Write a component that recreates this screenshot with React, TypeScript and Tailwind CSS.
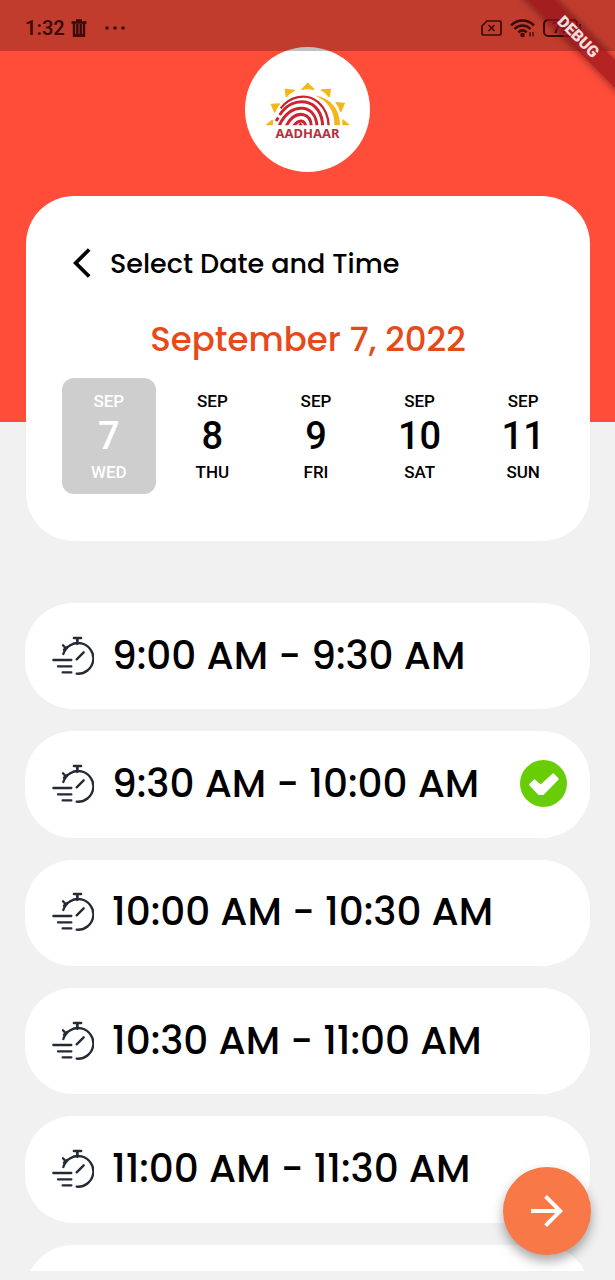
import { useState } from "react";
import { MdArrowBackIos, MdArrowForward } from "react-icons/md";

const days = [
  { month: "SEP", day: 7, weekday: "WED" },
  { month: "SEP", day: 8, weekday: "THU" },
  { month: "SEP", day: 9, weekday: "FRI" },
  { month: "SEP", day: 10, weekday: "SAT" },
  { month: "SEP", day: 11, weekday: "SUN" },
];

const slots = [
  "9:00 AM - 9:30 AM",
  "9:30 AM - 10:00 AM",
  "10:00 AM - 10:30 AM",
  "10:30 AM - 11:00 AM",
  "11:00 AM - 11:30 AM",
];

function StatusBar() {
  return (
    <div className="relative z-10 flex h-[51px] shrink-0 items-center bg-[#0a0a0a]/25 pt-1 pr-[34px] pl-[25px] text-[#3a0b08]">
      <span className="text-xl leading-6 font-semibold">1:32</span>
      <svg className="ml-1.5 h-[18px] w-4" viewBox="0 0 16 18" fill="none" stroke="currentColor">
        <path d="M0.500 3.500h15M5 1.500h6" strokeWidth="2.600" />
        <path d="M3 4v12.500h10V4M6.300 5v11M9.700 5v11" strokeWidth="2.400" />
        <path d="M2 16.500h12" strokeWidth="2.400" />
      </svg>
      <svg className="ml-[18px] h-1 w-5" viewBox="0 0 20 4" fill="currentColor">
        <circle cx="2" cy="2" r="1.800" />
        <circle cx="10" cy="2" r="1.800" />
        <circle cx="18" cy="2" r="1.800" />
      </svg>
      <svg className="ml-auto h-4 w-[21px]" viewBox="0 0 21 16" fill="none" stroke="currentColor" strokeWidth="1.700">
        <path d="M6 1h12.500a1.500 1.500 0 0 1 1.500 1.500v11a1.500 1.500 0 0 1-1.500 1.500h-16A1.500 1.500 0 0 1 1 13.500V6z" />
        <path d="m7.500 5 6 6m0-6-6 6" />
      </svg>
      <svg className="ml-2 h-5 w-[25px]" viewBox="0 0 25 20" fill="none" stroke="currentColor" strokeWidth="2.500">
        <path d="M1 7.500c6.500-6.600 16.500-6.600 23 0M4.500 11c4.500-4.600 11.500-4.600 16 0M8.300 14.300c2.600-2.400 5.800-2.400 8.400 0" />
        <circle cx="12.500" cy="17" r="1" />
        <path d="M20 14v4.500M23 14v4.500" strokeWidth="1.300" />
      </svg>
      <span className="ml-2 flex h-[18px] w-[35px] items-center justify-center rounded-[5px] border-2 border-current text-sm leading-4 font-bold">
        79
      </span>
      <span className="ml-px h-2 w-0.5 bg-current" />
    </div>
  );
}

function DebugRibbon() {
  return (
    <div className="pointer-events-none absolute top-0 right-0 z-20 size-24 overflow-hidden">
      <div className="absolute top-[27px] -left-[21px] flex h-5 w-40 rotate-45 items-center justify-center bg-[#961219]/70 text-base font-black text-white/85 shadow-[0_0_9px_rgba(0,0,0,0.5)]">
        DEBUG
      </div>
    </div>
  );
}

function AadhaarLogo() {
  return (
    <div className="mx-auto -mt-1 flex size-[125px] shrink-0 flex-col items-center rounded-full bg-white pt-[35px]">
      <svg className="h-11 w-[85px]" viewBox="75 124 255 132" aria-hidden="true">
        <clipPath id="horizon">
          <path d="M75 120h255v134H75z" />
        </clipPath>
        <g fill="#f3b71b" stroke="#f3b71b" strokeWidth="4" strokeLinejoin="round">
          <path d="M203 128l18 18c-12-3-24-3-35 0z" />
          <path d="M136 146l27 3c-10 5-17 10-24 19z" />
          <path d="M271 146l-27 2c10 5 18 11 24 20z" />
          <path d="M94 191l24-1c-7 8-11 14-14 24z" />
          <path d="M313 188l-25-2c7 8 11 15 14 27z" />
          <path d="M97 239v13H80zM309 238l17 14h-17z" />
        </g>
        <path fill="#f3b71b" d="M224 164c41 17 61 51 59 90h17c0-48-27-81-76-90z" />
        <g fill="none" stroke="#c9252f" strokeWidth="9" clipPath="url(#horizon)">
          <path d="M122 203c25-33 76-50 113-18 22 19 31 43 31 74" strokeWidth="7" />
          <path d="M119 223c20-31 49-44 77-39 33 6 52 36 52 75" />
          <path d="M108 241l7-10" />
          <path d="M118 254c17-38 45-54 71-51 28 4 41 27 42 56" />
          <path d="M138 257c14-27 33-39 52-35 16 4 24 17 24 37" />
          <path d="M160 257c15-22 34-22 38 2" />
          <path d="M178 256l7-7" />
        </g>
      </svg>
      <span className="font-['Noto_Sans'] text-[13px] leading-[14px] font-bold text-[#b5313d]">AADHAAR</span>
    </div>
  );
}

function StopwatchIcon() {
  return (
    <svg
      className="h-10 w-[42px] shrink-0"
      viewBox="94 120 126 120"
      fill="none"
      stroke="#252936"
      strokeWidth="7"
      strokeLinecap="round"
      aria-hidden="true"
    >
      <path d="M128 174A46 46 0 1 1 168 233" />
      <path d="M170 127v16M160 126h21" strokeWidth="8" />
      <path d="M127 148l9 10M139 153l-9 8" />
      <path d="M168 190l21-21" />
      <path d="M98 192h54M112 211h40M126 229h26" />
    </svg>
  );
}

function CheckBadge() {
  return (
    <svg className="ml-auto size-[47px] shrink-0" viewBox="0 0 141 141" aria-hidden="true">
      <circle cx="70.500" cy="70.500" r="70.500" fill="#69cd05" />
      <path
        d="M30 74l13-13 19 16 38-34 13 14-44 45H57z"
        fill="white"
        stroke="white"
        strokeWidth="6"
        strokeLinejoin="round"
      />
    </svg>
  );
}

export default function App() {
  const [selectedDay, setSelectedDay] = useState(7);
  const [selectedSlot, setSelectedSlot] = useState(slots[1]);

  return (
    <main className="relative flex h-screen flex-col overflow-hidden bg-[linear-gradient(#ff4d3a_422px,#f1f1f1_422px)] font-[Roboto,sans-serif] text-black">
      <StatusBar />
      <DebugRibbon />
      <AadhaarLogo />

      <section className="mt-6 mr-[25px] ml-[26px] shrink-0 rounded-[48px] bg-white pt-[47px] pb-[47px]">
        <header className="flex h-10 items-center pl-[47px] font-[Poppins,Inter,sans-serif]">
          <button type="button" aria-label="Back" className="w-[37px]">
            <MdArrowBackIos className="size-9" />
          </button>
          <h1 className="pt-0.5 text-[27px] leading-10 font-medium">Select Date and Time</h1>
        </header>
        <h2 className="mt-[33px] text-center font-[Poppins,Inter,sans-serif] text-[34px] leading-[46px] font-medium text-[#e64a19]">
          September 7, 2022
        </h2>
        <div className="mt-4 grid grid-cols-5 gap-2.5 pr-5 pl-9">
          {days.map(({ month, day, weekday }) => (
            <button
              key={day}
              type="button"
              aria-pressed={selectedDay === day}
              onClick={() => setSelectedDay(day)}
              className={`flex h-[116px] flex-col items-center justify-center rounded-xl font-medium ${
                selectedDay === day ? "bg-[#cecece] text-white" : ""
              }`}
            >
              <span className="text-[17px] leading-5">{month}</span>
              <span className="text-[38px] leading-[51px]">{day}</span>
              <span className="text-[17px] leading-5">{weekday}</span>
            </button>
          ))}
        </div>
      </section>

      <div className="mx-[25px] mt-[62px] mb-[9px] min-h-0 flex-1 overflow-y-auto [scrollbar-width:none]">
        <div className="grid h-[748px] auto-rows-fr gap-[22px]">
          {slots.map((slot) => (
            <button
              key={slot}
              type="button"
              aria-pressed={selectedSlot === slot}
              onClick={() => setSelectedSlot(slot)}
              className="flex items-center gap-[18px] rounded-[48px] bg-white pr-[23px] pb-px pl-[27px] text-left font-[Poppins,Inter,sans-serif] text-[39px] leading-[56px] font-medium whitespace-nowrap"
            >
              <StopwatchIcon />
              <span>{slot}</span>
              {selectedSlot === slot && <CheckBadge />}
            </button>
          ))}
          <button type="button" aria-label="Next time slot" className="rounded-[48px] bg-white" />
        </div>
      </div>

      <button
        type="button"
        aria-label="Continue"
        className="absolute right-6 bottom-[25px] flex size-[88px] items-center justify-center rounded-full bg-[#f97848] text-white shadow-[0_6px_12px_rgba(0,0,0,0.35)]"
      >
        <MdArrowForward className="size-12" />
      </button>
    </main>
  );
}
